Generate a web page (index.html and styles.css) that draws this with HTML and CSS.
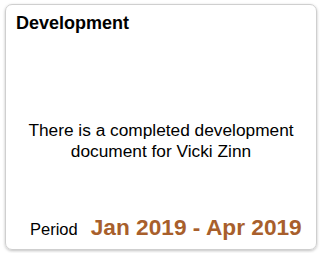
FILE: index.html
```html
<!DOCTYPE html>
<html>
<head>
<meta charset="utf-8">
<link rel="stylesheet" href="styles.css">
</head>
<body>
<div class="card">
  <div class="title">Development</div>
  <div class="message">There is a completed development document for Vicki Zinn</div>
  <div class="period">
    <span class="period-label">Period</span>
    <span class="period-value">Jan 2019 - Apr 2019</span>
  </div>
</div>
</body>
</html>
```

FILE: styles.css
```css
html, body {
  margin: 0;
  padding: 0;
  background: #ffffff;
}
body {
  padding: 4px 3px 3px 5px;
  font-family: "Liberation Sans", Arial, sans-serif;
  color: #000;
}
.card {
  box-sizing: border-box;
  width: 312px;
  height: 246px;
  border: 1px solid #cfcfcf;
  border-radius: 7px;
  box-shadow: 0 1px 3px rgba(0,0,0,0.25);
  display: flex;
  flex-direction: column;
  padding: 8px 10px 8px 10px;
}
.title {
  font-size: 18px;
  font-weight: bold;
  line-height: 21px;
}
.message {
  flex: 1;
  display: flex;
  align-items: center;
  justify-content: center;
  text-align: center;
  font-size: 17.3px;
  line-height: 21px;
  padding-top: 34px;
}
.period {
  display: flex;
  align-items: baseline;
  justify-content: flex-start;
  gap: 13px;
  padding-left: 14px;
}
.period-label {
  font-size: 16.5px;
}
.period-value {
  font-size: 22.7px;
  font-weight: bold;
  color: #a85f2c;
}
```
